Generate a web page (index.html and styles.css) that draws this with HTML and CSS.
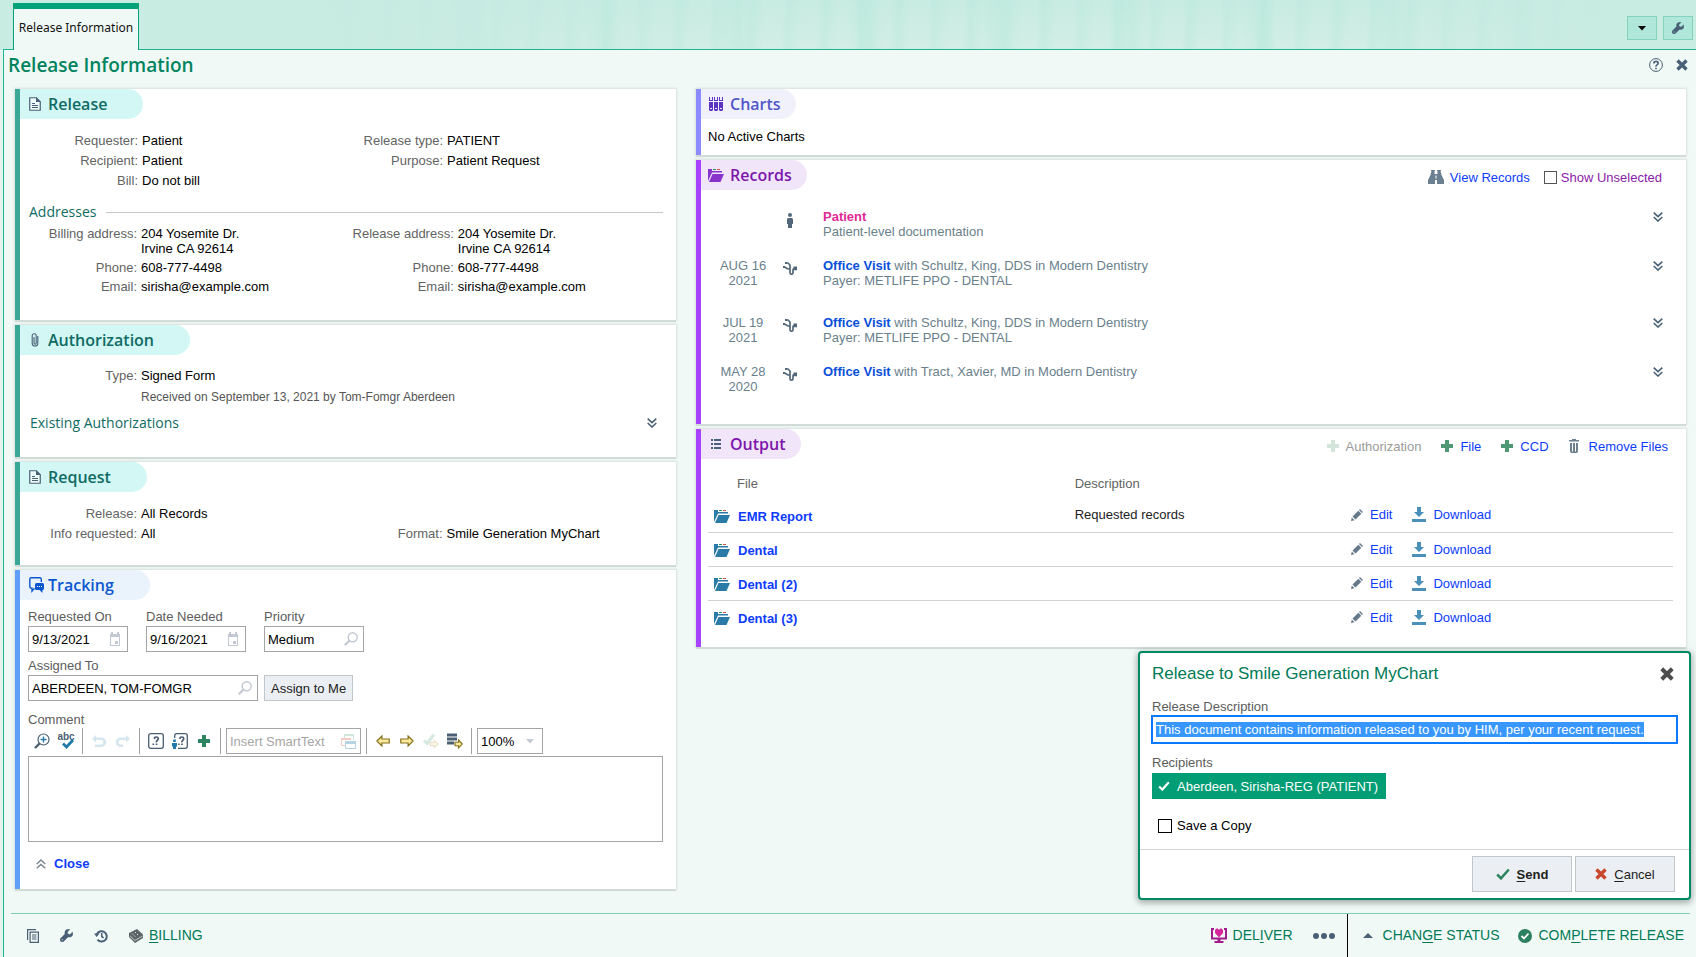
FILE: index.html
```html
<!DOCTYPE html>
<html lang="en">
<head>
<meta charset="utf-8">
<title>Release Information</title>
<link rel="stylesheet" href="styles.css">
</head>
<body>
<svg class="sprite" aria-hidden="true">
  <symbol id="doc" viewBox="0 0 12 14"><path d="M.75.75h6.500l4 4v8.500H.75z" fill="#fff" fill-opacity=".6" stroke="currentColor" stroke-width="1.200"/><path d="M7 0l5 5H7zM3 6h3v1H3zM3 8h6v1H3zM3 10h6v1H3z" fill="currentColor"/></symbol>
  <symbol id="clip" viewBox="0 0 8 14"><path d="M6.800 3v7.200a2.800 2.800 0 0 1-5.600 0V2.800a2 2 0 0 1 4 0V10a1.100 1.100 0 0 1-2.200 0V4" fill="none" stroke="currentColor" stroke-width="1.100"/></symbol>
  <symbol id="chat" viewBox="0 0 15 16"><path d="M12.300 5V2.200A1.500 1.500 0 0 0 10.800.8H2.200A1.500 1.500 0 0 0 .8 2.200v7.400a1.500 1.500 0 0 0 1.500 1.500H3v3l2.500-2.800" fill="none" stroke="currentColor" stroke-width="1.400"/><path d="M7.500 6h6A1.500 1.500 0 0 1 15 7.500v4a1.500 1.500 0 0 1-1.500 1.500v3l-3-3h-3A1.500 1.500 0 0 1 6 11.500v-4A1.500 1.500 0 0 1 7.500 6z" fill="currentColor"/><path d="M8 9h1v1H8zM10 9h1v1h-1zM12 9h1v1h-1z" fill="#fff"/></symbol>
  <symbol id="binders" viewBox="0 0 14 14"><path d="M0 0h1v3h2V0h1v13l-1 1H1l-1-1zM5 0h1v3h2V0h1v13l-1 1H6l-1-1zM10 0h1v3h2V0h1v13l-1 1h-2l-1-1z" fill="currentColor"/><path d="M0 4h14v1H0zM1 11h2v1H1zM6 11h2v1H6zM11 11h2v1h-2z" fill="#f1f1fc"/></symbol>
  <symbol id="folder" viewBox="0 0 16 13"><path d="M0 0h4v2h10v1.500H4L0 12zM4.500 5H16l-3.500 8H1z" fill="currentColor"/><path class="tab-a" d="M5 0h3v1H5z"/><path class="tab-b" d="M9 0h3v1H9z"/></symbol>
  <symbol id="list" viewBox="0 0 10 10"><path d="M0 0h2v2H0zM3 0h7v2H3zM0 4h2v2H0zM3 4h7v2H3zM0 8h2v2H0zM3 8h7v2H3z" fill="currentColor"/></symbol>
  <symbol id="person" viewBox="0 0 8 16"><path d="M4 0a2 2 0 1 1 0 4 2 2 0 0 1 0-4zM2.500 5h3A1.500 1.500 0 0 1 7 6.500V11H6v4H2v-4H1V6.500A1.500 1.500 0 0 1 2.500 5z" fill="currentColor"/></symbol>
  <symbol id="steth" viewBox="0 0 14 13"><path d="M3.500 1h1.500l2 2v4H5L1 4.800M7 6.500v4q0 1.700 1.500 1.700T10 10.500V8q0-1.500 1.800-1.500" fill="none" stroke="currentColor" stroke-width="1.700"/><path d="M10.500 4.500H14v3.700h-3.500zM2 0h2v2H2zM0 4h2v2H0z" fill="currentColor"/></symbol>
  <symbol id="down2" viewBox="0 0 10 10"><path d="M.7.7L5 4.600 9.300.7M.7 5L5 9l4.300-4" fill="none" stroke="currentColor" stroke-width="1.600"/></symbol>
  <symbol id="up2" viewBox="0 0 10 10"><path d="M.7 5L5 1l4.300 4M.7 9.300L5 5.400l4.300 3.900" fill="none" stroke="currentColor" stroke-width="1.400"/></symbol>
  <symbol id="plus" viewBox="0 0 12 12"><path d="M4 0h4v4h4v4H8v4H4V8H0V4h4z" fill="currentColor"/></symbol>
  <symbol id="trash" viewBox="0 0 10 14"><path d="M3 0h4v1h3v1.500H0V1h3zM1 4h8v8.500L8 14H2l-1-1.500z" fill="currentColor"/><path d="M3 4h1v8.500H3zM6 4h1v8.500H6z" fill="#fff"/></symbol>
  <symbol id="pencil" viewBox="0 0 12 12"><path d="M1.500 7.500l5.800-5.800 3 3L4.500 10.500zM8 1l1-1 3 3-1 1zM0 12l.8-3.500L3.500 11.200z" fill="currentColor"/></symbol>
  <symbol id="download" viewBox="0 0 14 15"><path d="M5 0h4v5h3L7 10 2 5h3zM0 12h14v3H0z" fill="currentColor"/></symbol>
  <symbol id="binoc" viewBox="0 0 16 14"><path d="M3 0h4v1H6.500v3h3V1H9V0h4v1h-.5l1 4L16 10v4H9v-4H7v4H0v-4l2.500-5 1-4H3z" fill="currentColor"/><path d="M7.500 5.500h1v3h-1z" fill="#fff"/></symbol>
  <symbol id="cal" viewBox="0 0 10 14"><path d="M1 0h2v2h4V0h2v2h1v12H0V2h1zM1 5v8h8V5z" fill="currentColor" fill-rule="evenodd"/><path d="M5 9h3v3H5z" fill="currentColor"/></symbol>
  <symbol id="mag" viewBox="0 0 14 14"><circle cx="8.700" cy="5.300" r="4.500" fill="none" stroke="currentColor" stroke-width="1.500"/><path d="M5.500 8.500L.8 13.200" stroke="currentColor" stroke-width="2.200"/></symbol>
  <symbol id="magplus" viewBox="0 0 16 16"><circle cx="9.500" cy="6.500" r="5.500" fill="#fff" stroke="#4a6072" stroke-width="1.200"/><path d="M5.500 10.500L1 15" stroke="#4a6072" stroke-width="2.400"/><path d="M9.500 3.500v6M6.500 6.500h6" stroke="#2a7aa8" stroke-width="1.400"/></symbol>
  <symbol id="spell" viewBox="0 0 12 10"><path d="M1 4.500l3.500 3.500L11 1" fill="none" stroke="#217aa9" stroke-width="2.800"/></symbol>
  <symbol id="undo" viewBox="0 0 14 12"><path d="M4 0v2.500h5.500A4 4 0 0 1 9.500 12H3V9.500h6.200a2 2 0 0 0 0-4.500H4v2.500L0 3.800z" fill="currentColor"/></symbol>
  <symbol id="redo" viewBox="0 0 14 12"><path d="M10 0v2.500H4.500a4 4 0 0 0 0 9.500H7V9.500H4.800a2 2 0 0 1 0-4.500H10v2.500l4-3.700z" fill="currentColor"/></symbol>
  <symbol id="wild" viewBox="0 0 16 16"><rect x=".7" y=".7" width="14.600" height="14.600" rx="2" fill="#fff" stroke="#4a5c72" stroke-width="1.300"/><path d="M6.500 6V5.500Q6.500 4 8.300 4T10.300 5.600Q10.300 6.600 9.200 7.500T8.500 9.300" fill="none" stroke="#4a5c72" stroke-width="1.700"/><path d="M7.700 10.500h1.700V12H7.700zM4.500 10.500h1.600V12H4.500z" fill="#4a5c72"/></symbol>
  <symbol id="wildme" viewBox="0 0 16 16"><path d="M2.700 5V2.700a2 2 0 0 1 2-2h8.600a2 2 0 0 1 2 2v10.600a2 2 0 0 1-2 2H6" fill="none" stroke="#4a5c72" stroke-width="1.300"/><path d="M8 6V5.500Q8 4 9.800 4t2 1.600q0 1-1.100 1.900T10 9.300" fill="none" stroke="#4a5c72" stroke-width="1.700"/><path d="M9.200 10.500h1.700V12H9.200zM6.200 10.500h1.500V12H6.200z" fill="#4a5c72"/><path d="M1.200 6.500h2.600V9H1.200zM0 10h5v3.500H4V16H1v-2.500H0z" fill="#217aa9"/></symbol>
  <symbol id="stack" viewBox="0 0 15 15"><path d="M3 0h10v2H3z" fill="#cfe5da"/><path d="M3.500 1v3M12.500 1v5" stroke="#cfe5da"/><path d="M0 4h10v2H0z" fill="#f4cac3"/><path d="M.5 5v6.500H4" fill="none" stroke="#f4cac3"/><path d="M4.500 7.500h10v7h-10z" fill="#fff" stroke="#b5d5e6"/><path d="M4 7h11v3H4z" fill="#b5d5e6"/></symbol>
  <symbol id="aleft" viewBox="0 0 14 12"><path d="M.9 6l5-5v3h7.300v4H5.900v3z" fill="#fdea9b" stroke="#85701c" stroke-width="1.200"/></symbol>
  <symbol id="aright" viewBox="0 0 14 12"><path d="M13.100 6l-5-5v3H.8v4h7.300v3z" fill="#fdea9b" stroke="#85701c" stroke-width="1.200"/></symbol>
  <symbol id="accept" viewBox="0 0 16 15"><path d="M1 7l3 3L11 1" fill="none" stroke="#d6e9e0" stroke-width="3"/><path d="M15.300 10.500L11 6.800v2.200H7v3h4v2.300z" fill="#fdf8e4" stroke="#e4dcc6"/></symbol>
  <symbol id="listgo" viewBox="0 0 16 15"><path d="M0 0h10v3H0zM0 4h10v3H0zM0 8h7v3H0z" fill="#4a6072"/><path d="M15.300 10.500L11.500 6.500v2.300H8v3.400h3.500v2.300z" fill="#fdea9b" stroke="#85701c" stroke-width="1.100"/></symbol>
  <symbol id="wrench" viewBox="0 0 13 13"><path d="M12.500 3.200L10 5.500 7.800 5 7.400 3 9.700.5C7.800-.4 5 .8 4.900 3.300L5 5 .5 9.500c-1.500 2 1 4.500 3 3L8 8l2 .1c2.500-.5 3.500-3 2.500-4.900zM2.200 11.600a.8.8 0 1 1 0-1.600.8.800 0 0 1 0 1.600z" fill="currentColor" stroke="currentColor" stroke-width=".5" fill-rule="evenodd"/></symbol>
  <symbol id="help" viewBox="0 0 14 14"><circle cx="7" cy="7" r="6.400" fill="none" stroke="currentColor"/><path d="M4.900 5.500Q4.900 3.400 7 3.400t2.100 1.900Q9.100 6.200 8 6.900T7 8.700" fill="none" stroke="currentColor" stroke-width="1.700"/><path d="M6.200 9.700h1.600v1.500H6.200z" fill="currentColor"/></symbol>
  <symbol id="x" viewBox="0 0 12 12"><path d="M1.500 1.500l9 9M10.500 1.500l-9 9" stroke="currentColor" stroke-width="3.400"/></symbol>
  <symbol id="check" viewBox="0 0 14 12"><path d="M1.200 6.500l3.800 3.800L12.800 1.500" fill="none" stroke="currentColor" stroke-width="2.600"/></symbol>
  <symbol id="caret-d" viewBox="0 0 8 5"><path d="M0 0h8L4 4.500z" fill="currentColor"/></symbol>
  <symbol id="caret-u" viewBox="0 0 10 5"><path d="M0 5h10L5 0z" fill="currentColor"/></symbol>
  <symbol id="copy" viewBox="0 0 12 14"><path d="M9 .6H.6V11" fill="none" stroke="currentColor" stroke-width="1.200"/><path d="M3.100 3.100h8.300v10.300H3.100z" fill="none" stroke="currentColor" stroke-width="1.200"/><path d="M5 5.500h4.500v1H5zM5 7.500h4.500v1H5zM5 9.500h4.500v1H5z" fill="currentColor"/></symbol>
  <symbol id="history" viewBox="0 0 14 13"><path d="M3.500 10.200A5.200 5.200 0 1 0 2.700 5" fill="none" stroke="currentColor" stroke-width="2"/><path d="M0 4h5.500L2.700 7.500zM7 3.500h1.500v3L10 7.700l-.8 1.200L7 7.500z" fill="currentColor"/></symbol>
  <symbol id="cards" viewBox="0 0 14 14"><path d="M0 4l8-4 6 5.500v3.500l-8 5-6-6z" fill="#5c6468"/><path d="M3 4.500l1 1M6 3l1 1M5 6.500l1 1M8 5l1 1" stroke="#dfe8e5" stroke-width="1" fill="none"/><path d="M1 6.800l5 4.700 7.500-4.500" stroke="#dfe8e5" stroke-width=".8" fill="none"/></symbol>
  <symbol id="heart" viewBox="0 0 16 15"><path d="M3 1H1v9.500h14V1h-2" fill="none" stroke="#a31c8c" stroke-width="2"/><path d="M8 9.500L4 5V2l1.500-1.500h1.300L8 2 9.200.5h1.300L12 2v3z" fill="#d9259d"/><path d="M6.500 11h3v2h3v2h-9v-2h3z" fill="#a31c8c"/></symbol>
  <symbol id="okay" viewBox="0 0 14 14"><circle cx="7" cy="7" r="7" fill="#2c8060"/><path d="M3.500 7l2.500 2.500 4.500-5" fill="none" stroke="#fff" stroke-width="1.800"/></symbol>
</svg>

<header class="banner">
  <a class="tab" href="#main">Release Information</a>
  <div class="banner-tools">
    <button class="tool" type="button" aria-label="Menu"><svg class="i-caret"><use href="#caret-d"/></svg></button>
    <button class="tool slate" type="button" aria-label="Settings"><svg class="i12"><use href="#wrench"/></svg></button>
  </div>
</header>

<main class="page" id="main">
  <div class="page-head">
    <h1>Release Information</h1>
    <button class="plain slate" type="button" aria-label="Help"><svg class="i14"><use href="#help"/></svg></button>
    <button class="plain slate" type="button" aria-label="Close page"><svg class="i12"><use href="#x"/></svg></button>
  </div>

  <div class="columns">
    <div class="column">
      <section class="card teal release">
        <h2><svg class="doc"><use href="#doc"/></svg>Release</h2>
        <dl class="pairs">
          <dt>Requester:</dt><dd>Patient</dd><dt>Release type:</dt><dd>PATIENT</dd>
          <dt>Recipient:</dt><dd>Patient</dd><dt>Purpose:</dt><dd>Patient Request</dd>
          <dt>Bill:</dt><dd>Do not bill</dd>
        </dl>
        <h3 class="ruled">Addresses</h3>
        <dl class="pairs address">
          <dt>Billing address:</dt><dd>204 Yosemite Dr.<br>Irvine CA 92614</dd><dt>Release address:</dt><dd>204 Yosemite Dr.<br>Irvine CA 92614</dd>
          <dt>Phone:</dt><dd>608-777-4498</dd><dt>Phone:</dt><dd>608-777-4498</dd>
          <dt>Email:</dt><dd>sirisha@example.com</dd><dt>Email:</dt><dd>sirisha@example.com</dd>
        </dl>
      </section>

      <section class="card teal authorization">
        <h2><svg class="clip"><use href="#clip"/></svg>Authorization</h2>
        <dl class="pairs">
          <dt>Type:</dt><dd class="wide">Signed Form<small>Received on September 13, 2021 by Tom-Fomgr Aberdeen</small></dd>
        </dl>
        <div class="expander">
          <h3>Existing Authorizations</h3>
          <button class="plain slate" type="button" aria-label="Expand authorizations"><svg class="i10"><use href="#down2"/></svg></button>
        </div>
      </section>

      <section class="card teal request">
        <h2><svg class="doc"><use href="#doc"/></svg>Request</h2>
        <dl class="pairs">
          <dt>Release:</dt><dd class="wide">All Records</dd>
          <dt>Info requested:</dt><dd>All</dd><dt>Format:</dt><dd>Smile Generation MyChart</dd>
        </dl>
      </section>

      <section class="card blue tracking">
        <h2><svg class="chat"><use href="#chat"/></svg>Tracking</h2>
        <div class="form">
          <div class="fields">
            <div class="field"><label for="req">Requested On</label><div class="box"><input id="req" value="9/13/2021"><svg class="cal"><use href="#cal"/></svg></div></div>
            <div class="field"><label for="need">Date Needed</label><div class="box"><input id="need" value="9/16/2021"><svg class="cal"><use href="#cal"/></svg></div></div>
            <div class="field"><label for="prio">Priority</label><div class="box look"><input id="prio" value="Medium"><svg class="i14"><use href="#mag"/></svg></div></div>
          </div>
          <div class="fields assign">
            <div class="field"><label for="who">Assigned To</label><div class="box look long"><input id="who" value="ABERDEEN, TOM-FOMGR"><svg class="i14"><use href="#mag"/></svg></div></div>
            <button class="btn" type="button">Assign to Me</button>
          </div>
          <label class="comment-label" for="comment">Comment</label>
          <div class="toolbar">
            <div class="tools">
              <button class="plain" type="button" aria-label="Zoom in"><svg class="i16"><use href="#magplus"/></svg></button>
              <button class="plain spell" type="button"><span>abc</span><svg><use href="#spell"/></svg></button>
            </div>
            <div class="tools faint">
              <button class="plain" type="button" aria-label="Undo"><svg class="turn"><use href="#undo"/></svg></button>
              <button class="plain" type="button" aria-label="Redo"><svg class="turn"><use href="#redo"/></svg></button>
            </div>
            <div class="tools">
              <button class="plain" type="button" aria-label="Next wildcard"><svg class="i16"><use href="#wild"/></svg></button>
              <button class="plain" type="button" aria-label="My wildcard"><svg class="i16"><use href="#wildme"/></svg></button>
              <button class="plain green" type="button" aria-label="Add"><svg class="i12"><use href="#plus"/></svg></button>
            </div>
            <div class="tools pad">
              <div class="box smart"><input aria-label="Insert SmartText" placeholder="Insert SmartText"><svg class="i15"><use href="#stack"/></svg></div>
            </div>
            <div class="tools">
              <button class="plain" type="button" aria-label="Previous"><svg class="turn"><use href="#aleft"/></svg></button>
              <button class="plain" type="button" aria-label="Next"><svg class="turn"><use href="#aright"/></svg></button>
              <button class="plain" type="button" aria-label="Accept"><svg class="i16"><use href="#accept"/></svg></button>
              <button class="plain" type="button" aria-label="Accept list"><svg class="i16"><use href="#listgo"/></svg></button>
            </div>
            <div class="tools pad">
              <div class="box zoom"><select aria-label="Zoom"><option>100%</option></select><svg class="i-caret"><use href="#caret-d"/></svg></div>
            </div>
          </div>
          <textarea id="comment"></textarea>
          <a class="close" href="#main"><svg class="i10"><use href="#up2"/></svg>Close</a>
        </div>
      </section>
    </div>

    <div class="column">
      <section class="card indigo charts">
        <h2><svg class="i14"><use href="#binders"/></svg>Charts</h2>
        <p>No Active Charts</p>
      </section>

      <section class="card purple records">
        <div class="card-head">
          <h2><svg class="folder"><use href="#folder"/></svg>Records</h2>
          <div class="actions">
            <a href="#main"><svg class="binoc"><use href="#binoc"/></svg>View Records</a>
            <label><input type="checkbox">Show Unselected</label>
          </div>
        </div>
        <ul>
          <li><span></span><svg class="person"><use href="#person"/></svg><p><b class="pink">Patient</b><br>Patient-level documentation</p><button class="plain slate" type="button" aria-label="Expand"><svg class="i10"><use href="#down2"/></svg></button></li>
          <li class="tall"><time>AUG 16<br>2021</time><svg class="steth"><use href="#steth"/></svg><p><b>Office Visit</b> with Schultz, King, DDS in Modern Dentistry<br>Payer: METLIFE PPO - DENTAL</p><button class="plain slate" type="button" aria-label="Expand"><svg class="i10"><use href="#down2"/></svg></button></li>
          <li><time>JUL 19<br>2021</time><svg class="steth"><use href="#steth"/></svg><p><b>Office Visit</b> with Schultz, King, DDS in Modern Dentistry<br>Payer: METLIFE PPO - DENTAL</p><button class="plain slate" type="button" aria-label="Expand"><svg class="i10"><use href="#down2"/></svg></button></li>
          <li><time>MAY 28<br>2020</time><svg class="steth"><use href="#steth"/></svg><p><b>Office Visit</b> with Tract, Xavier, MD in Modern Dentistry</p><button class="plain slate" type="button" aria-label="Expand"><svg class="i10"><use href="#down2"/></svg></button></li>
        </ul>
      </section>

      <section class="card purple output">
        <div class="card-head">
          <h2><svg class="i10"><use href="#list"/></svg>Output</h2>
          <div class="actions">
            <a class="off" href="#main"><svg class="i12"><use href="#plus"/></svg>Authorization</a>
            <a href="#main"><svg class="i12"><use href="#plus"/></svg>File</a>
            <a href="#main"><svg class="i12"><use href="#plus"/></svg>CCD</a>
            <a href="#main"><svg class="trash"><use href="#trash"/></svg>Remove Files</a>
          </div>
        </div>
        <table>
          <thead><tr><th class="c-file">File</th><th>Description</th><th class="c-act"></th></tr></thead>
          <tbody>
            <tr><td><a class="name" href="#main"><svg class="folder"><use href="#folder"/></svg>EMR Report</a></td><td>Requested records</td><td><div class="acts"><a href="#main"><svg class="i12"><use href="#pencil"/></svg>Edit</a><a href="#main"><svg class="dl"><use href="#download"/></svg>Download</a></div></td></tr>
            <tr><td><a class="name" href="#main"><svg class="folder"><use href="#folder"/></svg>Dental</a></td><td></td><td><div class="acts"><a href="#main"><svg class="i12"><use href="#pencil"/></svg>Edit</a><a href="#main"><svg class="dl"><use href="#download"/></svg>Download</a></div></td></tr>
            <tr><td><a class="name" href="#main"><svg class="folder"><use href="#folder"/></svg>Dental (2)</a></td><td></td><td><div class="acts"><a href="#main"><svg class="i12"><use href="#pencil"/></svg>Edit</a><a href="#main"><svg class="dl"><use href="#download"/></svg>Download</a></div></td></tr>
            <tr><td><a class="name" href="#main"><svg class="folder"><use href="#folder"/></svg>Dental (3)</a></td><td></td><td><div class="acts"><a href="#main"><svg class="i12"><use href="#pencil"/></svg>Edit</a><a href="#main"><svg class="dl"><use href="#download"/></svg>Download</a></div></td></tr>
          </tbody>
        </table>
      </section>
    </div>
  </div>

  <footer>
    <div class="foot-left">
      <button class="plain slate" type="button" aria-label="Copy"><svg class="doc"><use href="#copy"/></svg></button>
      <button class="plain slate" type="button" aria-label="Tools"><svg class="i13"><use href="#wrench"/></svg></button>
      <button class="plain slate" type="button" aria-label="History"><svg class="i14"><use href="#history"/></svg></button>
      <button class="plain" type="button"><svg class="i14"><use href="#cards"/></svg><span><u>B</u>ILLING</span></button>
    </div>
    <div class="foot-right">
      <button class="plain" type="button"><svg class="heart"><use href="#heart"/></svg><span>DEL<u>I</u>VER</span></button>
      <button class="plain dots" type="button" aria-label="More"><i></i><i></i><i></i></button>
      <div class="status">
        <button class="plain" type="button"><svg class="rise"><use href="#caret-u"/></svg><span>CHAN<u>G</u>E STATUS</span></button>
        <button class="plain" type="button"><svg class="i14"><use href="#okay"/></svg><span>COM<u>P</u>LETE RELEASE</span></button>
      </div>
    </div>
  </footer>
</main>

<div class="dialog" role="dialog" aria-labelledby="dlg-title">
  <div class="dialog-body">
    <div class="dialog-head">
      <h2 id="dlg-title">Release to Smile Generation MyChart</h2>
      <button class="plain dark" type="button" aria-label="Close dialog"><svg class="i14"><use href="#x"/></svg></button>
    </div>
    <label for="desc">Release Description</label>
    <input id="desc" class="desc" value="This document contains information released to you by HIM, per your recent request.">
    <div class="recipients">Recipients</div>
    <button class="chip" type="button"><svg><use href="#check"/></svg>Aberdeen, Sirisha-REG (PATIENT)</button>
    <label class="save"><input type="checkbox">Save a Copy</label>
  </div>
  <div class="dialog-foot">
    <button class="btn send" type="button"><svg class="turn"><use href="#check"/></svg><span><u>S</u>end</span></button>
    <button class="btn cancel" type="button"><svg class="i12"><use href="#x"/></svg><span><u>C</u>ancel</span></button>
  </div>
</div>
<script src="app.js"></script>
</body>
</html>
```

FILE: app.js
```js
var desc = document.getElementById("desc");
desc.focus();
desc.select();
```

FILE: styles.css
```css
* { box-sizing: border-box; }
body {
  margin: 0;
  min-height: 100vh;
  display: flex;
  flex-direction: column;
  position: relative;
  background: #e4f4ef;
  color: #000;
  font: 13px/15px "Liberation Sans", Arial, sans-serif;
}
h1, h2, h3, p, dl, dd, ul { margin: 0; padding: 0; font-weight: 400; }
h1, .card h2, h3 { font-family: "Open Sans", "Segoe UI", sans-serif; }
ul { list-style: none; }
a { color: #0d3cff; text-decoration: none; }
button, input, select, textarea { font: inherit; color: inherit; margin: 0; }
svg { display: block; flex: none; overflow: visible; }
.sprite { position: absolute; width: 0; height: 0; }
.i10 { width: 10px; height: 10px; }
.i12 { width: 12px; height: 12px; }
.i13 { width: 13px; height: 13px; }
.i14 { width: 14px; height: 14px; }
.i15 { width: 15px; height: 15px; }
.i16 { width: 16px; height: 16px; }
.i-caret { width: 8px; height: 5px; }
.doc { width: 12px; height: 14px; }
.cal { width: 10px; height: 14px; }
.clip { width: 8px; height: 14px; margin: 0 2px; }
.chat { width: 15px; height: 16px; }
.folder { width: 16px; height: 13px; }
.turn { width: 14px; height: 12px; }
.slate { color: #4a6076; }
.green { color: #2c8560; }
.dark { color: #4d4d4d; }
.plain { border: 0; padding: 0; background: none; display: flex; align-items: center; }

.banner {
  height: 50px;
  padding: 3px 4px 0 13px;
  display: flex;
  justify-content: space-between;
  background:
    linear-gradient(90deg, #c8ebe2 18%, transparent 45%, transparent 80%, #c8ebe2 96%),
    repeating-linear-gradient(92deg, transparent 0 14px, #b5e8da66 22px, transparent 34px 52px, #b5e8da55 58px, transparent 73px),
    repeating-linear-gradient(87deg, transparent 0 60px, #b5e8da66 84px, transparent 97px 131px),
    linear-gradient(#c8ebe2, #d3eee6);
}
.tab {
  z-index: 1;
  height: 47px;
  min-width: 126px;
  padding: 10px 4px 0;
  border: solid #02a178;
  border-width: 6px 1px 0;
  background: #f0f9f6;
  color: #111;
  font: 12px/17px "Noto Sans", "Segoe UI", sans-serif;
  text-align: center;
  white-space: nowrap;
}
.banner-tools { display: flex; gap: 6px; padding: 13px 0 0; margin-right: -1px; }
.tool {
  width: 30px;
  height: 24px;
  padding: 0;
  display: flex;
  align-items: center;
  justify-content: center;
  border: 1px solid #85d3bd;
  background: #afe7da;
}

.page {
  flex: 1;
  display: flex;
  flex-direction: column;
  margin: -1px 0 0 3px;
  border: solid #1fb491;
  border-width: 1px 0 0 1px;
  background: #f0f9f6;
}
.page-head { display: flex; align-items: center; gap: 13px; height: 39px; padding: 0 8px 10px 4px; }
h1 { flex: 1; color: #00845f; font-size: 19px; font-weight: 600; line-height: 26px; }
.columns { display: grid; grid-template-columns: 661fr 990fr; gap: 20px; padding: 0 10px 0 11px; }
.column { display: flex; flex-direction: column; gap: 5px; min-width: 0; }

.card {
  border-left: 5px solid;
  background: #fff;
  box-shadow: 0 0 2px 1px #d7dfdc, 0 2px 0 #ccd6d3;
}
.card h2 {
  width: max-content;
  height: 30px;
  display: flex;
  align-items: center;
  gap: 7px;
  padding: 0 36px 0 9px;
  border-radius: 0 15px 15px 0;
  font-size: 16px;
  font-weight: 600;
  line-height: 28px;
}
.column + .column .card h2 { gap: 6px; padding: 0 15px 0 7px; }
.teal { border-color: #3aa797; }
.teal h2 { background: #d2f7f4; color: #0f6b64; }
.teal h2 svg { color: #4a6076; }
.blue { border-color: #5f9ffa; }
.blue h2 { gap: 4px; background: #eaf2fc; color: #0b57d0; }
.indigo { border-color: #8b8bff; }
.indigo h2 { background: #f1f1fc; color: #5156c8; }
.indigo h2 svg { color: #5a35c0; margin: 0 1px; }
.purple { border-color: #a742ff; }
.purple h2 { background: #f1e5fa; color: #7d16ab; }
.records h2 svg { color: #8833cc; }
h3 { color: #0f6b64; font-size: 14px; line-height: 20px; }

.pairs {
  display: grid;
  grid-template-columns: 109px 13fr 110px 15fr;
  column-gap: 4px;
  row-gap: 5px;
  padding: 14px 13px 0 8px;
}
.release .pairs { grid-template-columns: 110px 13fr 110px 15fr; }
.release .address { grid-template-columns: 109px 31fr 110px 32fr; row-gap: 4px; padding-top: 4px; }
dt { color: #636363; text-align: right; white-space: nowrap; }
dd { white-space: nowrap; }
.wide { grid-column: span 3; }
dd small { display: block; margin-top: 7px; color: #555; font-size: 12px; }
.release { min-height: 231px; }
.ruled { display: flex; align-items: center; gap: 10px; padding: 0 13px 0 9px; margin-top: 14px; }
.ruled::after { content: ""; flex: 1; border-top: 1px solid #c6c6c6; }
.authorization { min-height: 132px; }
.authorization .pairs { padding-top: 13px; }
.expander { display: flex; justify-content: space-between; align-items: center; padding: 8px 19px 0 10px; }
.request { min-height: 103px; }

.form { padding: 9px 13px 18px 8px; }
.fields { display: flex; gap: 18px; }
.assign { align-items: flex-end; gap: 6px; margin-top: 6px; }
.field { display: flex; flex-direction: column; gap: 2px; }
.form label { color: #5c5c5c; }
.box {
  width: 100px;
  height: 26px;
  display: flex;
  align-items: center;
  padding: 0 7px 0 3px;
  border: 1px solid #a5a5a5;
  background: #fff;
  color: #c3c9d2;
}
.look { padding-right: 5px; }
.box input, .box select { flex: 1; min-width: 0; width: 0; border: 0; padding: 0; background: none; color: #000; outline: 0; appearance: none; }
.long { width: 230px; }
.btn {
  height: 26px;
  padding: 0 6px;
  border: 1px solid #c0c7cc;
  background: #ebeff3;
  color: #222;
  white-space: nowrap;
}
.comment-label { display: block; margin-top: 11px; }
.toolbar { display: flex; height: 26px; margin-top: 1px; }
.tools { display: flex; align-items: center; justify-content: center; padding: 0 4px; border-right: 1px solid #a0a0a0; }
.tools:last-child { border-right: 0; }
.tools.pad { padding: 0 5px; }
.tools .plain { width: 24px; height: 26px; justify-content: center; }
.tools:first-child { padding: 0 4px 0 2px; }
.faint { color: #d5e6ee; }
.tools .spell { flex-direction: column; justify-content: flex-start; }
.spell span { font-size: 10px; font-weight: 700; line-height: 9px; margin-top: 4px; color: #4a6072; }
.spell svg { width: 12px; height: 10px; margin: -2px 0 0 4px; }
.smart { width: 135px; padding-right: 4px; }
.smart input::placeholder { color: #a6a6a6; opacity: 1; }
.zoom { width: 66px; padding-right: 8px; }
textarea { display: block; width: 100%; height: 86px; margin-top: 2px; padding: 2px 3px; border: 1px solid #a5a5a5; background: #fff; resize: none; }
.close { display: flex; align-items: center; gap: 8px; margin-top: 14px; padding-left: 8px; font-weight: 700; width: max-content; }
.close svg { color: #77838d; }

.charts { min-height: 66px; }
.charts p { padding: 10px 7px 8px; }
.card-head { display: flex; justify-content: space-between; align-items: center; }
.actions { display: flex; align-items: center; margin-top: 4px; }
.actions a, .actions label { display: flex; align-items: center; }
.records .actions { gap: 14px; padding-right: 24px; }
.records .actions a { gap: 6px; }
.records .actions label { gap: 4px; color: #8b1ba9; }
.binoc { width: 16px; height: 14px; color: #6b7f90; }
input[type="checkbox"] { appearance: none; width: 13px; height: 13px; border: 1px solid #555; background: #fff; }
.records ul { padding: 19px 23px 30px 7px; color: #6a7f8c; }
.records li { display: grid; grid-template-columns: 70px 24px 1fr 10px; height: 49px; }
.records li.tall { height: 57px; }
.records li:last-child { height: 30px; }
.records li > svg { margin: 4px auto 0; color: #52677a; }
.records p { padding-left: 21px; }
.records time { text-align: center; }
.records b { color: #0a50d8; }
.records b.pink { color: #df2a96; }
.records li .plain { align-self: start; margin-top: 3px; }
.person { width: 8px; height: 16px; }
.steth { width: 14px; height: 13px; }

.output { min-height: 218px; }
.output .actions { gap: 20px; padding-right: 18px; }
.output .actions a { gap: 7px; }
.output .actions .i12 { color: #4f9874; }
.output .actions .off { color: #9b9b9b; }
.output .actions .off svg { color: #d3e5db; }
.output h2 .i10 { color: #4a6076; margin: 0 3px; }
.trash { width: 10px; height: 14px; color: #6b7f90; }
.output .actions a:last-child { gap: 10px; }
table { width: calc(100% - 20px); margin: 10px 13px 0 7px; border-collapse: collapse; table-layout: fixed; }
th { padding: 0 0 0 29px; height: 29px; font-weight: 400; text-align: left; color: #636363; }
th + th { padding-left: 0; }
.c-file { width: 38%; }
.c-act { width: 322px; }
td { height: 34px; padding: 0; color: #222; }
tbody tr + tr { border-top: 1px solid #cfd3d2; }
.name { display: flex; align-items: center; gap: 8px; padding: 3px 0 0 6px; font-weight: 700; }
.name svg { color: #2b7ba8; }
.tab-a { fill: #2f8a63; }
.tab-b { fill: #cc5540; }
h2 .tab-a, h2 .tab-b { fill: #8833cc; }
.acts { display: flex; gap: 20px; }
.acts a { display: flex; align-items: center; gap: 7px; }
.acts .i12 { color: #66798a; }
.dl { width: 14px; height: 15px; color: #4a90b8; }

footer {
  display: flex;
  justify-content: space-between;
  margin: auto 6px 0 7px;
  height: 44px;
  border-top: 1px solid #7fcdb8;
  color: #007a57;
  font-size: 14px;
}
.foot-left { display: flex; align-items: center; gap: 21px; padding-left: 16px; }
.foot-left .plain { gap: 6px; }
.foot-right { display: flex; align-items: center; gap: 20px; padding-right: 6px; }
.foot-right .plain { gap: 6px; }
.heart { width: 16px; height: 15px; }
u { text-underline-offset: 2px; }
.foot-right .dots { gap: 2px; }
.dots i { width: 6px; height: 6px; border-radius: 3px; background: #4a6076; }
.status { display: flex; align-self: stretch; align-items: center; gap: 19px; margin-left: -8px; padding-left: 15px; border-left: 1px solid #000; }
.rise { width: 10px; height: 5px; margin-right: 4px; color: #4a6076; }

.dialog {
  position: absolute;
  right: 5px;
  bottom: 57px;
  z-index: 5;
  width: 553px;
  border: 2px solid #008a64;
  border-radius: 4px;
  background: #fff;
  box-shadow: 0 2px 6px 1px #00000050;
}
.dialog-body { display: flex; flex-direction: column; align-items: flex-start; padding: 11px 11px 16px 12px; color: #5c5c5c; }
.dialog-head { display: flex; justify-content: space-between; align-items: center; align-self: stretch; padding-right: 4px; }
.dialog h2 { color: #007a57; font-size: 17px; line-height: 20px; }
.dialog-body > label { margin-top: 15px; }
.dialog .desc {
  align-self: stretch;
  height: 29px;
  margin: 1px 0 0 -1px;
  padding: 0 3px;
  border: 2px solid #0a78ff;
  background: #fff;
  color: #000;
  outline: 0;
}
.desc::selection { background: #3797ff; color: #fff; }
.recipients { margin-top: 11px; }
.chip { display: flex; align-items: center; gap: 7px; height: 26px; margin-top: 3px; padding: 0 8px 0 6px; border: 0; background: #019d74; color: #fff; white-space: nowrap; }
.chip svg { width: 12px; height: 10px; }
.dialog-body > .save { display: flex; align-items: center; gap: 5px; margin: 19px 0 0 6px; color: #000; }
.save input { width: 14px; height: 14px; border-color: #000; }
.dialog-foot { display: flex; justify-content: flex-end; gap: 3px; padding: 6px 14px; border-top: 1px solid #d5d5d5; }
.dialog-foot .btn { width: 100px; height: 36px; display: flex; align-items: center; justify-content: center; gap: 7px; }
.send { font-weight: 700; }
.send svg { color: #2c8560; }
.cancel svg { color: #c9472c; }
```
